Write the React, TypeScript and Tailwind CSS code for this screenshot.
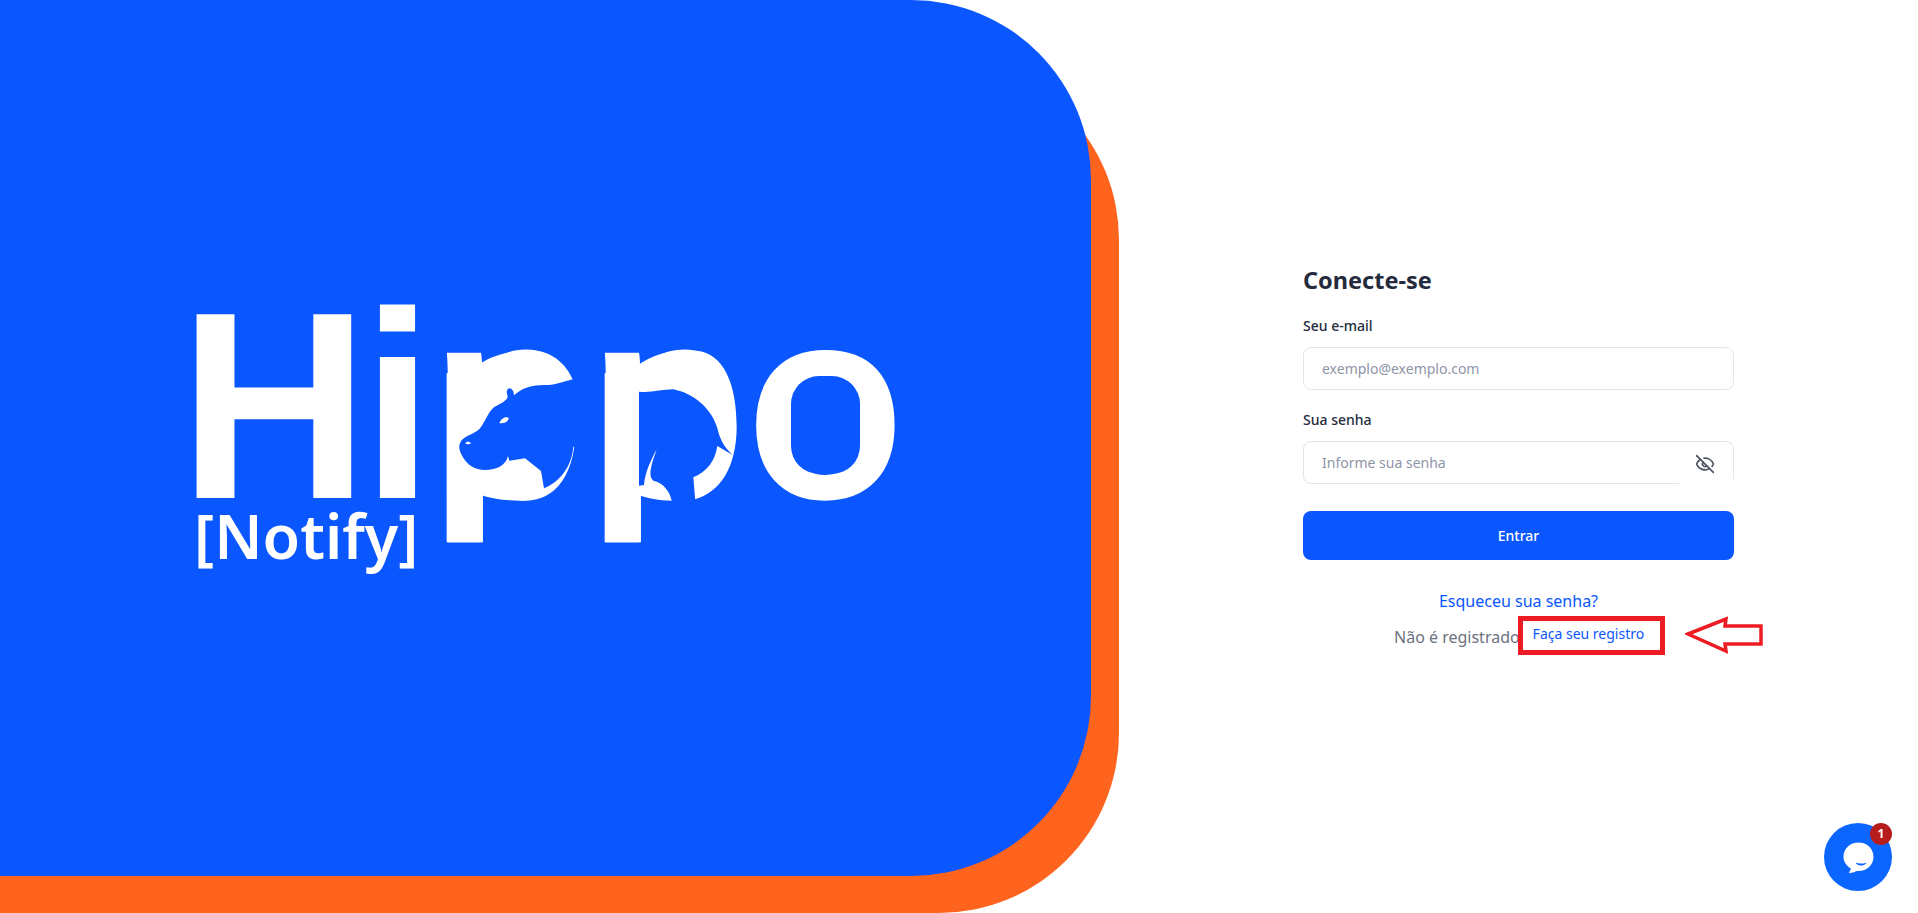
import { EyeOff } from "lucide-react";

const font = { fontFamily: '"Noto Sans", sans-serif' };

// hippo cut out of the two p letters, coordinates are 3x the logo crop
const HippoOverlay = () => (
  <svg
    className="absolute left-[246px] top-[36px]"
    width="300"
    height="240"
    viewBox="0 0 900 720"
  >
    {/* trims the descenders */}
    <rect x="0" y="607" width="700" height="113" fill="#0a56ff" />
    <rect x="0" y="465" width="20" height="142" fill="#0a56ff" />
    {/* white fill behind the cut outs */}
    <path
      fill="#fff"
      d="M110 78 C160 40 230 28 290 32 C340 38 380 75 398 118 L400 320 C396 400 340 470 250 482 C200 482 160 478 122 465 L122 607 L20 607 L20 100 Z"
    />
    <path
      fill="#fff"
      d="M590 78 C640 40 700 28 770 32 C850 40 890 130 890 260 C890 380 840 460 765 473 L695 482 C660 482 620 475 597 465 L597 607 L494 607 L494 100 Z"
    />
    {/* head */}
    <path
      fill="#0a56ff"
      d="M398 118 C370 125 350 134 325 135 C295 135 255 135 222 166 C222 155 216 145 208 145 C200 146 198 158 203 168 C204 178 190 188 170 197 C150 205 140 235 125 258 C112 280 85 282 68 298 C55 312 55 325 65 345 C80 375 105 390 135 390 C170 390 198 375 204 348 L208 362 L255 355 L303 393 L312 445 C360 425 395 380 400 320 L440 320 L440 100 Z"
    />
    <path fill="#fff" d="M178 250 C183 235 195 228 206 233 C205 245 195 250 178 250 Z" />
    <path fill="#fff" d="M76 310 C80 304 88 304 93 310 C88 314 80 314 76 310 Z" />
    {/* body */}
    <path
      fill="#0a56ff"
      d="M597 155 C630 160 665 148 700 148 C760 160 815 205 832 265 C840 300 855 325 878 345 L832 318 C825 365 800 395 760 412 L765 473 L765 520 L695 520 L695 482 C690 455 670 428 640 422 C625 410 630 385 650 328 C630 365 615 400 612 435 L597 437 Z"
    />
  </svg>
);

const Logo = () => (
  <div className="relative w-[703px] h-[268px] text-white" style={font}>
    <div
      className="absolute left-[-15px] top-[-39px] flex items-baseline leading-none font-bold"
      style={{ fontFamily: '"Liberation Sans", sans-serif' }}
    >
      <span className="w-[183px] text-[267px] origin-left scale-x-[0.985]">H</span>
      <span className="w-[68px] text-[267px] origin-left scale-x-[0.96]">i</span>
      <span className="w-[158px] text-[275px] origin-left scale-x-[0.93]">p</span>
      <span className="w-[158px] text-[275px] origin-left scale-x-[0.93]">p</span>
      <span className="text-[275px] origin-left scale-x-[0.945]">o</span>
    </div>
    <HippoOverlay />
    {/* squarer counter of the o */}
    <div className="absolute left-[597px] top-[72px] w-[69px] h-[98px] rounded-[28px] bg-[#0a56ff]" />
    <div className="absolute left-0 top-[197px] text-[61px] leading-[70px] font-semibold">
      [Notify]
    </div>
  </div>
);

const RedArrow = () => (
  <svg className="absolute left-[152px] top-[-5px]" width="80" height="40" viewBox="0 0 80 40">
    <path
      d="M3 18 L41 3 L40 10 L76 10 L76 28 L40 28 L41 35 Z"
      fill="none"
      stroke="#ed1c24"
      strokeWidth="3.5"
    />
  </svg>
);

export default function App() {
  return (
    <div className="flex h-[913px] w-full overflow-hidden bg-white" style={font}>
      {/* Left panel */}
      <div className="relative w-[1119px] flex-none">
        <div className="absolute left-0 right-0 bottom-0 top-[60px] bg-[#ff641e] rounded-r-[180px]" />
        <div className="relative w-[1091px] h-[876px] bg-[#0a56ff] rounded-r-[180px] flex items-center justify-center">
          <Logo />
        </div>
      </div>

      {/* Form */}
      <div className="flex-1 flex justify-center pt-[262px]">
        <div className="w-[431px] flex flex-col">
          <h1 className="text-[23.5px] leading-[36px] font-bold text-[#242b3d]">Conecte-se</h1>

          <label className="mt-[18px] text-sm leading-[20px] font-medium text-[#242b3d]">Seu e-mail</label>
          <div className="mt-[11px] h-[43px] rounded-lg border border-[#e2e5ef] flex items-center pl-[18px]">
            <span className="text-sm text-[#8f95a8]">exemplo@exemplo.com</span>
          </div>

          <label className="mt-[20px] text-sm leading-[20px] font-medium text-[#242b3d]">Sua senha</label>
          <div className="relative mt-[11px] h-[43px] rounded-lg border border-[#e2e5ef] flex items-center pl-[18px]">
            <span className="text-sm text-[#8f95a8]">Informe sua senha</span>
            <div className="absolute right-0 top-0 bottom-[-2px] w-[57px] bg-white rounded-lg flex items-center justify-center">
              <EyeOff className="w-5 h-5 text-[#4b5563]" />
            </div>
          </div>

          <button className="mt-[27px] h-[49px] rounded-lg bg-[#0a56ff] text-white text-sm font-medium">
            Entrar
          </button>

          <a className="mt-[29px] text-center text-base leading-[24px] text-[#0a56ff]">Esqueceu sua senha?</a>

          <div className="mt-[12px] h-[24px] flex items-center pl-[91px] text-base text-[#6b7280]">
            Não é registrado?
            <div className="relative ml-[6px] -mt-[8px]">
              <div className="absolute left-[-15px] top-[-5px] w-[147px] h-[39px] bg-white border-[5px] border-[#ed1c24]" />
              <span className="relative text-sm text-[#0a56ff]">Faça seu registro</span>
              <RedArrow />
            </div>
          </div>
        </div>
      </div>

      {/* Chat widget */}
      <div className="fixed right-[26px] bottom-[22px] w-[68px] h-[68px] rounded-full bg-[#0a66ff] flex items-center justify-center">
        <svg width="33" height="33" viewBox="0 0 44 44">
          <path
            fill="#fff"
            d="M22 2 C33 2 42 10 42 21 C42 32 33 40 22 40 C19 40 18 40.500 16 41.500 L9 43 L12 37 C6 33 2 28 2 21 C2 10 11 2 22 2 Z"
          />
          <path fill="#0a66ff" d="M18 29 C23 30.500 28 30.500 33 28.500 C30 34 21 34 18 29 Z" />
        </svg>
        <div className="absolute right-0 top-0 w-[22px] h-[22px] rounded-full bg-[#b71c1c] flex items-center justify-center text-white text-xs font-bold">
          1
        </div>
      </div>
    </div>
  );
}
